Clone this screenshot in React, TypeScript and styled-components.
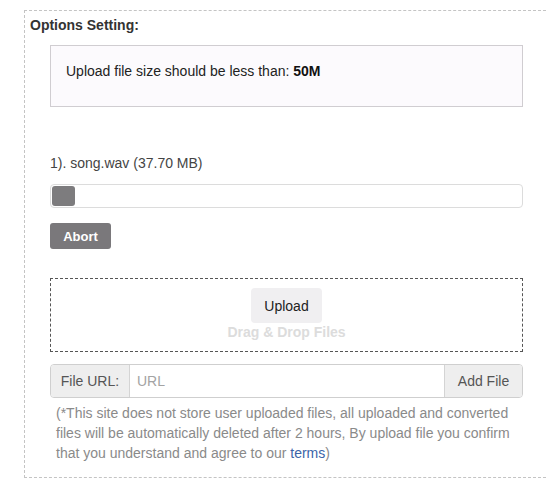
import { createGlobalStyle } from 'styled-components';
import styled from 'styled-components';

const GlobalStyle = createGlobalStyle`
    html, body {
        margin: 0;
        padding: 0;
        background: #fff;
        overflow: hidden;
    }
    body {
        font-family: 'Liberation Sans', Arial, sans-serif;
        color: #333;
    }
`;

// the panel continues past the right side of the view, so no right edge is drawn
const Fieldset = styled.section`
    margin: 10px 0 0 24px;
    border: 1px dashed #c4c4c4;
    border-right: none;
    padding: 5px 0 14px 5px;
    box-sizing: border-box;
`;

const Legend = styled.div`
    font-size: 14px;
    font-weight: bold;
    line-height: 18px;
    color: #333;
`;

const Content = styled.div`
    width: 473px;
    margin-left: 20px;
    display: flex;
    flex-direction: column;
`;

const InfoBox = styled.div`
    margin-top: 11px;
    height: 62px;
    box-sizing: border-box;
    padding: 16px 15px 0;
    background: #fcfafd;
    border: 1px solid #d0cdd1;
    font-size: 14px;
    line-height: 18px;
    color: #222;
    b {
        color: #111;
    }
`;

const FileName = styled.div`
    margin-top: 47px;
    font-size: 14px;
    line-height: 18px;
    color: #444;
`;

const Progress = styled.div`
    margin-top: 12px;
    height: 24px;
    box-sizing: border-box;
    border: 1px solid #dcdcdc;
    border-radius: 4px;
    padding: 1px;
    display: flex;
`;

const ProgressFill = styled.div`
    height: 100%;
    background: #7d7c7e;
    border-radius: 3px;
`;

const AbortButton = styled.button`
    margin-top: 15px;
    align-self: flex-start;
    width: 61px;
    height: 26px;
    border: none;
    border-radius: 3px;
    background: #7a787b;
    color: #fff;
    font-family: inherit;
    font-size: 13px;
    font-weight: bold;
    padding: 0;
`;

const DropZone = styled.div`
    margin-top: 29px;
    height: 74px;
    box-sizing: border-box;
    border: 1px dashed #555;
    display: flex;
    flex-direction: column;
    align-items: center;
    padding-top: 9px;
`;

const UploadButton = styled.button`
    width: 71px;
    height: 35px;
    border: none;
    border-radius: 4px;
    background: #f0eff1;
    color: #222;
    font-family: inherit;
    font-size: 14px;
    padding: 0;
`;

const DropHint = styled.div`
    font-size: 14px;
    font-weight: bold;
    line-height: 18px;
    color: #dcdcdc;
`;

const UrlGroup = styled.div`
    margin-top: 12px;
    height: 34px;
    display: flex;
    box-sizing: border-box;
    border: 1px solid #cfcfcf;
    border-radius: 4px;
    overflow: hidden;
    font-size: 14px;
`;

const Addon = styled.span<{ $width: number; $side: 'left' | 'right' }>`
    width: ${({ $width }) => $width}px;
    flex: none;
    display: flex;
    align-items: center;
    justify-content: center;
    background: #eeeeee;
    color: #555;
    ${({ $side }) => ($side === 'left' ? 'border-right: 1px solid #d4d4d4;' : 'border-left: 1px solid #d4d4d4;')}
`;

const UrlInput = styled.input`
    flex: 1;
    min-width: 0;
    border: none;
    outline: none;
    padding: 0 7px;
    font-family: inherit;
    font-size: 14px;
    color: #555;
    background: #fff;
    &::placeholder {
        color: #a3a3a3;
    }
`;

const Note = styled.p`
    margin: 5px 0 0;
    padding-left: 6px;
    font-size: 14px;
    line-height: 20px;
    color: #8a8a8a;
`;

const TermsLink = styled.a`
    color: #3b64a8;
    text-decoration: none;
`;

export default function App() {
    const progress = 5;

    return (
        <>
            <GlobalStyle />
            <Fieldset>
                <Legend>Options Setting:</Legend>
                <Content>
                    <InfoBox>
                        Upload file size should be less than: <b>50M</b>
                    </InfoBox>
                    <FileName>1). song.wav (37.70 MB)</FileName>
                    <Progress>
                        <ProgressFill style={{ width: `${progress}%` }} />
                    </Progress>
                    <AbortButton>Abort</AbortButton>
                    <DropZone>
                        <UploadButton>Upload</UploadButton>
                        <DropHint>Drag &amp; Drop Files</DropHint>
                    </DropZone>
                    <UrlGroup>
                        <Addon $width={78} $side="left">
                            File URL:
                        </Addon>
                        <UrlInput placeholder="URL" />
                        <Addon $width={77} $side="right">
                            Add File
                        </Addon>
                    </UrlGroup>
                    <Note>
                        (*This site does not store user uploaded files, all uploaded and converted files will be
                        automatically deleted after 2 hours, By upload file you confirm that you understand and agree to
                        our <TermsLink href="#">terms</TermsLink>)
                    </Note>
                </Content>
            </Fieldset>
        </>
    );
}
